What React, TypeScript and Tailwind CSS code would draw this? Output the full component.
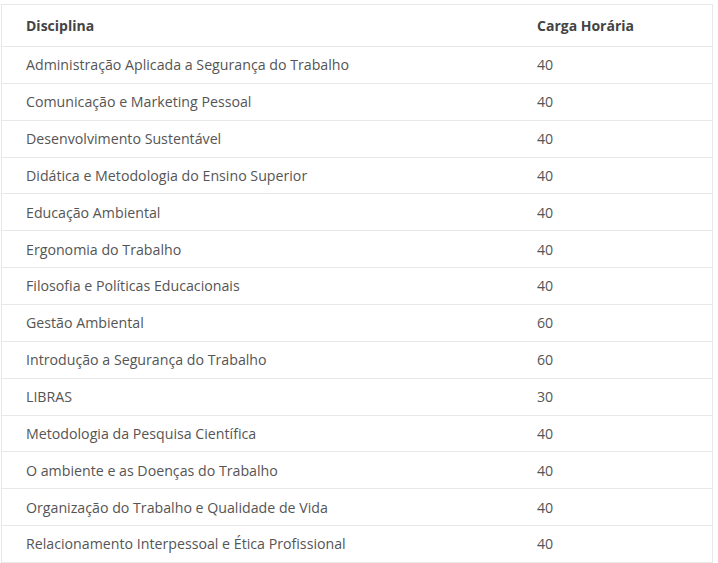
const rows: [string, number][] = [
  ['Administração Aplicada a Segurança do Trabalho', 40],
  ['Comunicação e Marketing Pessoal', 40],
  ['Desenvolvimento Sustentável', 40],
  ['Didática e Metodologia do Ensino Superior', 40],
  ['Educação Ambiental', 40],
  ['Ergonomia do Trabalho', 40],
  ['Filosofia e Políticas Educacionais', 40],
  ['Gestão Ambiental', 60],
  ['Introdução a Segurança do Trabalho', 60],
  ['LIBRAS', 30],
  ['Metodologia da Pesquisa Científica', 40],
  ['O ambiente e as Doenças do Trabalho', 40],
  ['Organização do Trabalho e Qualidade de Vida', 40],
  ['Relacionamento Interpessoal e Ética Profissional', 40],
];

export default function App() {
  return (
    <div className="min-h-[563px] bg-white pt-[4px] pl-[1px] font-['Open_Sans',sans-serif] text-[14px]">
      <div className="w-[712px] border-x border-t border-[#e8e8e8]">
        {/* cabeçalho */}
        <div className="flex h-[42px] items-center border-b border-[#e8e8e8] font-bold text-[#444]">
          <div className="w-[511px] pl-6">Disciplina</div>
          <div className="flex-1 pl-6">Carga Horária</div>
        </div>
        {rows.map(([name, hours]) => (
          <div key={name} className="flex h-[36.86px] items-center border-b border-[#e8e8e8] text-[14.2px] text-[#555]">
            <div className="w-[511px] pl-6">{name}</div>
            <div className="flex-1 pl-6">{hours}</div>
          </div>
        ))}
      </div>
    </div>
  );
}
